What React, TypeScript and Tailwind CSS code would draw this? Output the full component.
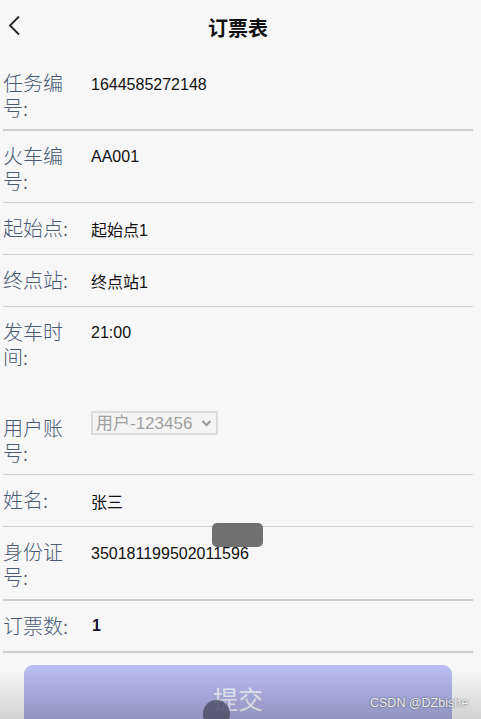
import React from "react";

const labelFont = { fontFamily: '"Noto Sans CJK SC", "Noto Sans", sans-serif' };
const valueFont = { fontFamily: '"Liberation Sans", "Noto Sans CJK SC", sans-serif' };

function Row({
  label,
  children,
  hClass,
  borderClass,
}: {
  label: string;
  children: React.ReactNode;
  hClass: string;
  borderClass: string;
}) {
  return (
    <div className={`flex items-start ${hClass} ${borderClass}`}>
      <div
        className="w-[68px] pt-[12px] text-[20px] font-light leading-[25px] text-[#4a5a73]"
        style={labelFont}
      >
        {label}
      </div>
      <div className="ml-[20px] flex-1">{children}</div>
    </div>
  );
}

function Val({ children }: { children: React.ReactNode }) {
  return (
    <div className="pt-[13px] text-[16px] leading-[25px] text-[#111]" style={valueFont}>
      {children}
    </div>
  );
}

export default function App() {
  return (
    <div className="relative h-[719px] w-[481px] overflow-hidden bg-[#f7f7f8]">
      {/* header */}
      <div className="relative flex h-[58px] items-start justify-center pr-[5px]">
        <svg
          className="absolute left-[7px] top-[15px]"
          width="14"
          height="21"
          viewBox="0 0 14 21"
          fill="none"
        >
          <path d="M12 1.5 L3 10.5 L12 19.5" stroke="#222" strokeWidth="1.8" />
        </svg>
        <div
          className="pt-[15px] text-[20px] font-bold leading-[25px] text-[#111]"
          style={labelFont}
        >
          订票表
        </div>
      </div>

      {/* form */}
      <div className="pl-[3px] pr-[8px]">
        <Row label="任务编号:" hClass="h-[73px]" borderClass="border-b-2 border-[#cfcfcf]">
          <Val>
            <span className="relative top-[1px]">1644585272148</span>
          </Val>
        </Row>
        <Row label="火车编号:" hClass="h-[72px]" borderClass="border-b border-[#d2d2d2]">
          <Val>AA001</Val>
        </Row>
        <Row label="起始点:" hClass="h-[52px]" borderClass="border-b border-[#d2d2d2]">
          <Val>
            <span className="relative top-[2px]">起始点1</span>
          </Val>
        </Row>
        <Row label="终点站:" hClass="h-[52px]" borderClass="border-b border-[#d2d2d2]">
          <Val>
            <span className="relative top-[2px]">终点站1</span>
          </Val>
        </Row>
        <Row label="发车时间:" hClass="h-[96px]" borderClass="">
          <Val>21:00</Val>
        </Row>
        <Row label="用户账号:" hClass="h-[72px]" borderClass="border-b border-[#d2d2d2]">
          <div className="pt-[8px]">
            <div
              className="flex h-[24px] w-[127px] items-center justify-between border-2 border-[#dcdcdc] bg-[#f4f4f4] pl-[3px] pr-[4px] text-[17px] leading-none text-[#a0a0a0]"
              style={valueFont}
            >
              <span>用户-123456</span>
              <svg width="11" height="8" viewBox="0 0 11 8" fill="none">
                <path d="M1.5 2 L5.5 6 L9.5 2" stroke="#9a9a9a" strokeWidth="2" />
              </svg>
            </div>
          </div>
        </Row>
        <Row label="姓名:" hClass="h-[52px]" borderClass="border-b border-[#d2d2d2]">
          <Val>
            <span className="relative top-[2px]">张三</span>
          </Val>
        </Row>
        <Row label="身份证号:" hClass="h-[74px]" borderClass="border-b-2 border-[#cfcfcf]">
          <Val>
            <span className="relative top-[1px]">350181199502011596</span>
          </Val>
        </Row>
        <Row label="订票数:" hClass="h-[52px]" borderClass="border-b-2 border-[#cfcfcf]">
          <Val>
            <span className="relative left-[1px] top-[-1px] font-bold text-[#1a1030]">1</span>
          </Val>
        </Row>
      </div>

      {/* submit button */}
      <div className="mt-[12px] ml-[24px] w-[428px]">
        <div
          className="flex h-[70px] justify-center rounded-t-[9px] bg-linear-to-b from-[#b9bdf1] to-[#a6a9dc] pt-[17px] text-[25px] leading-[32px] text-[#eef0fb]"
          style={labelFont}
        >
          提交
        </div>
      </div>

      {/* video overlay artifacts */}
      <div className="absolute left-[212px] top-[523px] h-[24px] w-[51px] rounded-[5px] bg-[#707070]" />
      <div className="pointer-events-none absolute inset-x-0 bottom-0 h-[50px] bg-linear-to-b from-transparent to-black/15" />
      <div className="absolute left-[203px] top-[700px] h-[28px] w-[27px] rounded-full bg-[#4d5068]/85" />
      <div
        className="absolute left-[370px] top-[695px] text-[12.5px] leading-[16px] text-[#eeeeee] [text-shadow:0_0_2px_rgba(0,0,0,0.6)]"
        style={valueFont}
      >
        CSDN @DZbishe
      </div>
    </div>
  );
}
